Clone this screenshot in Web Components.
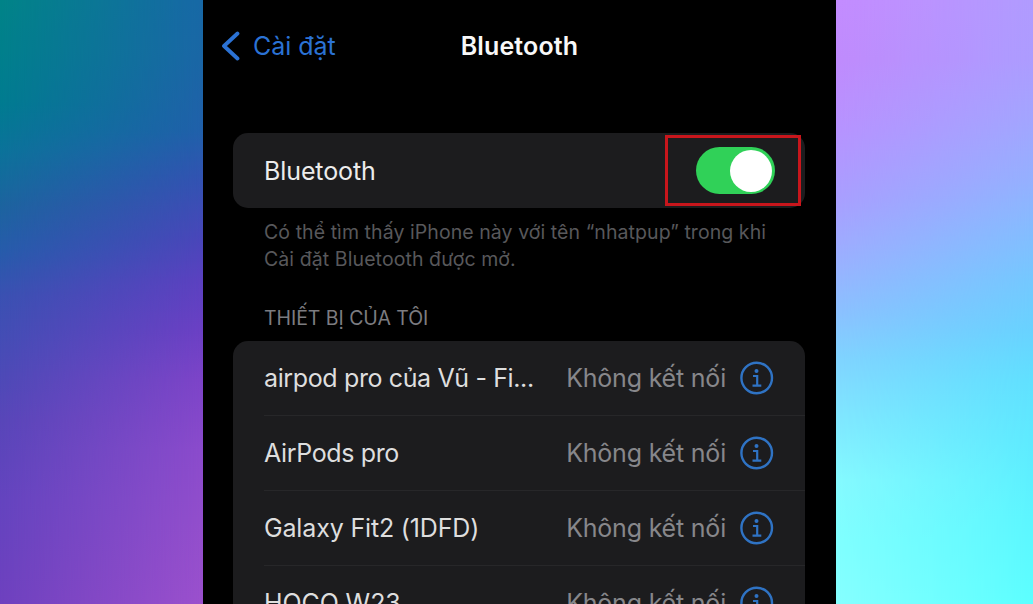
<!DOCTYPE html>
<html lang="vi">
<head>
<meta charset="utf-8">
<title>Bluetooth</title>
<style>
  body {
    margin: 0;
    height: 604px;
    overflow: hidden;
    background: #000;
    font-family: Inter, "Liberation Sans", sans-serif;
  }
</style>
</head>
<body>
<settings-stage>
  <nav-bar data-back="Cài đặt" data-title="Bluetooth"></nav-bar>
  <toggle-card>Bluetooth</toggle-card>
  <hint-text>
    <span>Có thể tìm thấy iPhone này với tên “nhatpup” trong khi</span>
    <span slot="second">Cài đặt Bluetooth được mở.</span>
  </hint-text>
  <device-list data-heading="THIẾT BỊ CỦA TÔI">
    <device-row data-status="Không kết nối" style="--tracking: -0.37px">airpod pro của Vũ - Fi...</device-row>
    <device-row data-status="Không kết nối" style="--tracking: -0.36px">AirPods pro</device-row>
    <device-row data-status="Không kết nối" style="--tracking: -0.16px">Galaxy Fit2 (1DFD)</device-row>
    <device-row data-status="Không kết nối" style="--tracking: -0.1px">HOCO W23</device-row>
  </device-list>
</settings-stage>

<script>
class SettingsStage extends HTMLElement {
  constructor() {
    super();
    this.attachShadow({ mode: 'open' });
  }

  connectedCallback() {
    this.shadowRoot.innerHTML = `
      <style>
        :host {
          display: grid;
          grid-template-columns: 203px 633px 197px;
          height: 604px;
          overflow: hidden;
        }
        .side {
          display: grid;
        }
        .side::after {
          content: "";
          -webkit-mask-image: linear-gradient(to right, transparent, #000);
          mask-image: linear-gradient(to right, transparent, #000);
        }
        /* each side blends its outer edge colours into its inner ones */
        .left {
          background: linear-gradient(#008488, #007c90 100px, #0b739a 150px, #1c649f 205px,
            #265cab 250px, #3a51b2 295px, #474cb6 350px, #5846b9 420px, #6444bf 500px, #6e41bf);
        }
        .left::after {
          background: linear-gradient(#1768a6, #1a66a6 60px, #2060aa 130px, #3352b2 180px,
            #4a46ba 240px, #5b41c0 280px, #6b40c4 330px, #7d44c8 380px, #8b4bcc 450px,
            #924ecc 520px, #9b50cd);
        }
        .right {
          background: linear-gradient(#c48cff, #c08bfd 60px, #b793ff 130px, #a99fff 200px,
            #9bb0ff 260px, #8cc0ff 310px, #80d4ff 360px, #80e8ff 420px, #85faff 480px,
            #80ffff 540px, #86ffff);
        }
        .right::after {
          background: linear-gradient(#b09bff, #ac9cff 60px, #a2a5ff 120px, #94b0ff 180px,
            #84bcff 230px, #74c8ff 280px, #68d2ff 330px, #60e0ff 380px, #5eeaff 440px,
            #5cf6ff 520px, #5cffff);
        }
        .phone {
          box-sizing: border-box;
          height: 604px;
          padding: 0 31px 0 30px;
          background: #000;
          overflow: hidden;
        }
      </style>
      <div class="side left"></div>
      <div class="phone"><slot></slot></div>
      <div class="side right"></div>
    `;
  }
}

class NavBar extends HTMLElement {
  constructor() {
    super();
    this.attachShadow({ mode: 'open' });
  }

  connectedCallback() {
    const back = this.getAttribute('data-back') || '';
    const title = this.getAttribute('data-title') || '';

    this.shadowRoot.innerHTML = `
      <style>
        :host {
          display: grid;
          grid-template-columns: 1fr auto 1fr;
          align-items: center;
          height: 92px;
          margin-left: -12px;
          margin-right: -13px;
          font-size: 25px;
          white-space: nowrap;
        }
        .back {
          display: flex;
          align-items: center;
          gap: 12px;
          color: #2b72d4;
          letter-spacing: -0.05px;
        }
        .title {
          color: #f8f8f8;
          font-weight: 600;
          letter-spacing: 0.15px;
        }
      </style>
      <div class="back">
        <svg width="20" height="30" viewBox="0 0 20 30" fill="none" stroke="#2b72d4" stroke-width="3.8" stroke-linecap="round" stroke-linejoin="round">
          <path d="M16.5 2.5 3 15 16.5 27.5"/>
        </svg>
        <span>${back}</span>
      </div>
      <div class="title">${title}</div>
    `;
  }
}

class ToggleCard extends HTMLElement {
  constructor() {
    super();
    this.attachShadow({ mode: 'open' });
  }

  connectedCallback() {
    this.shadowRoot.innerHTML = `
      <style>
        :host {
          position: relative;
          display: flex;
          align-items: center;
          justify-content: space-between;
          box-sizing: border-box;
          height: 75px;
          margin-top: 41px;
          padding: 0 30px 0 31px;
          border-radius: 15px;
          background: #1c1c1e;
          color: #ececec;
          font-size: 25px;
          letter-spacing: -0.1px;
        }
        .switch {
          display: flex;
          justify-content: flex-end;
          align-items: center;
          box-sizing: border-box;
          width: 79px;
          height: 47px;
          padding-right: 3px;
          border-radius: 24px;
          background: #30d158;
        }
        .knob {
          width: 42px;
          height: 42px;
          border-radius: 50%;
          background: #fff;
        }
        .highlight {
          position: absolute;
          top: 2px;
          right: 4px;
          box-sizing: border-box;
          width: 136px;
          height: 71px;
          border: 3px solid #c8161c;
        }
      </style>
      <span><slot></slot></span>
      <div class="switch"><div class="knob"></div></div>
      <div class="highlight"></div>
    `;
  }
}

class HintText extends HTMLElement {
  constructor() {
    super();
    this.attachShadow({ mode: 'open' });
  }

  connectedCallback() {
    this.shadowRoot.innerHTML = `
      <style>
        :host {
          display: block;
          padding: 11px 0 0 31px;
          color: #58585b;
          font-size: 19.5px;
          line-height: 27px;
          white-space: nowrap;
        }
        .first { letter-spacing: 0.07px; }
        .second { letter-spacing: 0.09px; }
      </style>
      <div class="first"><slot></slot></div>
      <div class="second"><slot name="second"></slot></div>
    `;
  }
}

class DeviceList extends HTMLElement {
  constructor() {
    super();
    this.attachShadow({ mode: 'open' });
  }

  connectedCallback() {
    const heading = this.getAttribute('data-heading') || '';

    this.shadowRoot.innerHTML = `
      <style>
        :host {
          display: block;
          margin-top: 33px;
        }
        .heading {
          padding-left: 31px;
          margin-bottom: 11px;
          color: #7c7c80;
          font-size: 19.5px;
          line-height: 24px;
          letter-spacing: -0.05px;
          white-space: nowrap;
        }
        .rows {
          border-radius: 15px;
          background: #1c1c1e;
          overflow: hidden;
        }
      </style>
      <div class="heading">${heading}</div>
      <div class="rows"><slot></slot></div>
    `;
  }
}

class DeviceRow extends HTMLElement {
  constructor() {
    super();
    this.attachShadow({ mode: 'open' });
  }

  connectedCallback() {
    const status = this.getAttribute('data-status') || '';

    this.shadowRoot.innerHTML = `
      <style>
        :host {
          display: block;
          padding-left: 31px;
          font-size: 25px;
          white-space: nowrap;
        }
        .row {
          display: flex;
          align-items: center;
          box-sizing: border-box;
          height: 75px;
          padding-right: 31px;
          border-bottom: 1px solid #272729;
        }
        .name {
          flex: 1;
          color: #dedede;
          letter-spacing: var(--tracking, 0);
        }
        .status {
          margin-right: 14px;
          color: #87878b;
          letter-spacing: -0.2px;
        }
        svg {
          display: block;
        }
      </style>
      <div class="row">
        <span class="name"><slot></slot></span>
        <span class="status">${status}</span>
        <svg width="34" height="34" viewBox="0 0 34 34" fill="none" stroke="#2f73c4" stroke-width="2.4">
          <circle cx="16.7" cy="17" r="15.3"/>
          <circle cx="16.5" cy="10" r="2" fill="#2f73c4" stroke="none"/>
          <path d="M13 15h4.2v9.6M12.5 24.7h8.8" stroke-width="2.2"/>
        </svg>
      </div>
    `;
  }
}

customElements.define('settings-stage', SettingsStage);
customElements.define('nav-bar', NavBar);
customElements.define('toggle-card', ToggleCard);
customElements.define('hint-text', HintText);
customElements.define('device-list', DeviceList);
customElements.define('device-row', DeviceRow);
</script>
</body>
</html>
